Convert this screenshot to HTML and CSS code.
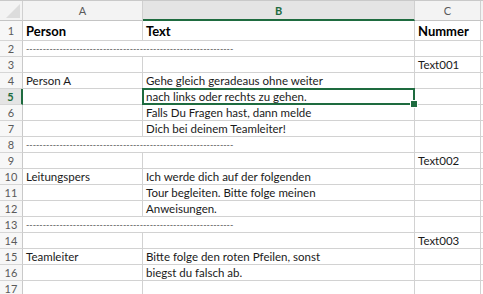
FILE: index.html
```html
<!DOCTYPE html>
<html lang="de">
<head>
    <meta charset="UTF-8">
    <meta name="viewport" content="width=device-width, initial-scale=1.0">
    <title>Tabelle</title>
    <link rel="stylesheet" href="styles.css">
</head>
<body>
    <div class="sheet">
        <div class="corner"></div>
        <div class="colhead">A</div>
        <div class="colhead active">B</div>
        <div class="colhead">C</div>
        <div class="colhead rest"></div>

        <div class="rowhead first">1</div>
        <div class="cell first bold">Person</div>
        <div class="cell first bold">Text</div>
        <div class="cell first bold">Nummer</div>
        <div class="cell first rest"></div>

        <div class="rowhead">2</div>
        <div class="cell spill"><span class="dashes">--------------------------------------------------------------</span></div>
        <div class="cell"></div>
        <div class="cell"></div>
        <div class="cell rest"></div>

        <div class="rowhead">3</div>
        <div class="cell"></div>
        <div class="cell"></div>
        <div class="cell">Text001</div>
        <div class="cell rest"></div>

        <div class="rowhead">4</div>
        <div class="cell">Person A</div>
        <div class="cell">Gehe gleich geradeaus ohne weiter</div>
        <div class="cell"></div>
        <div class="cell rest"></div>

        <div class="rowhead active">5</div>
        <div class="cell"></div>
        <div class="cell selected">nach links oder rechts zu gehen.</div>
        <div class="cell"></div>
        <div class="cell rest"></div>

        <div class="rowhead">6</div>
        <div class="cell"></div>
        <div class="cell">Falls Du Fragen hast, dann melde</div>
        <div class="cell"></div>
        <div class="cell rest"></div>

        <div class="rowhead">7</div>
        <div class="cell"></div>
        <div class="cell">Dich bei deinem Teamleiter!</div>
        <div class="cell"></div>
        <div class="cell rest"></div>

        <div class="rowhead">8</div>
        <div class="cell spill"><span class="dashes">--------------------------------------------------------------</span></div>
        <div class="cell"></div>
        <div class="cell"></div>
        <div class="cell rest"></div>

        <div class="rowhead">9</div>
        <div class="cell"></div>
        <div class="cell"></div>
        <div class="cell">Text002</div>
        <div class="cell rest"></div>

        <div class="rowhead">10</div>
        <div class="cell">Leitungspers</div>
        <div class="cell">Ich werde dich auf der folgenden</div>
        <div class="cell"></div>
        <div class="cell rest"></div>

        <div class="rowhead">11</div>
        <div class="cell"></div>
        <div class="cell">Tour begleiten. Bitte folge meinen</div>
        <div class="cell"></div>
        <div class="cell rest"></div>

        <div class="rowhead">12</div>
        <div class="cell"></div>
        <div class="cell">Anweisungen.</div>
        <div class="cell"></div>
        <div class="cell rest"></div>

        <div class="rowhead">13</div>
        <div class="cell spill"><span class="dashes">--------------------------------------------------------------</span></div>
        <div class="cell"></div>
        <div class="cell"></div>
        <div class="cell rest"></div>

        <div class="rowhead">14</div>
        <div class="cell"></div>
        <div class="cell"></div>
        <div class="cell">Text003</div>
        <div class="cell rest"></div>

        <div class="rowhead">15</div>
        <div class="cell">Teamleiter</div>
        <div class="cell">Bitte folge den roten Pfeilen, sonst</div>
        <div class="cell"></div>
        <div class="cell rest"></div>

        <div class="rowhead">16</div>
        <div class="cell"></div>
        <div class="cell">biegst du falsch ab.</div>
        <div class="cell"></div>
        <div class="cell rest"></div>

        <div class="rowhead">17</div>
        <div class="cell"></div>
        <div class="cell"></div>
        <div class="cell"></div>
        <div class="cell rest"></div>
    </div>
</body>
</html>
```

FILE: styles.css
```css
* { box-sizing: border-box; }
body {
    margin: 0;
    background: #fff;
    font-family: "Lato", "Liberation Sans", sans-serif;
    overflow: hidden;
}
.sheet {
    display: grid;
    grid-template-columns: 23px 120px 272px 66px 20px;
    grid-template-rows: 20px 20px repeat(16, 16px);
    border-top: 1px solid #c9c9c9;
}
.corner, .colhead, .rowhead {
    background: #f3f3f3;
    border-right: 1px solid #d0d0d0;
    border-bottom: 1px solid #c4c4c4;
    color: #5a5a5a;
    font-size: 11px;
}
.corner {
    position: relative;
}
.corner::after {
    content: "";
    position: absolute;
    right: 2px;
    bottom: 2px;
    border-left: 14px solid transparent;
    border-bottom: 14px solid #dcdcdc;
}
.colhead {
    display: flex;
    align-items: center;
    justify-content: center;
}
.colhead.active {
    background: #e4e4e4;
    color: #1e6b3f;
    font-weight: bold;
    border-bottom: 2px solid #1e6b3f;
}
.rowhead {
    display: flex;
    align-items: center;
    justify-content: center;
    background: #f7f7f7;
    border-bottom: 1px solid #d6d6d6;
    border-right: 1px solid #c9c9c9;
}
.rowhead.active {
    background: #e4e4e4;
    color: #1e6b3f;
    font-weight: bold;
    border-right: 2px solid #1e6b3f;
}
.cell {
    border-right: 1px solid #d2d2d2;
    border-bottom: 1px solid #d2d2d2;
    font-size: 11.5px;
    color: #1a1a1a;
    padding: 0 3px;
    white-space: nowrap;
    overflow: hidden;
    display: flex;
    align-items: center;
}
.cell.bold {
    font-weight: bold;
    font-size: 13px;
    color: #000;
}
.cell.spill {
    overflow: visible;
    border-right: none;
}
.dashes {
    color: #555;
    font-size: 9px;
}
.selected {
    position: relative;
    overflow: visible;
}
.selected::after {
    content: "";
    position: absolute;
    left: -1px;
    top: -1px;
    right: -1px;
    bottom: -1px;
    border: 2px solid #1e6b3f;
}
.selected::before {
    content: "";
    position: absolute;
    right: -4px;
    bottom: -4px;
    width: 6px;
    height: 6px;
    background: #1e6b3f;
    border: 1px solid #fff;
    z-index: 2;
}
```
